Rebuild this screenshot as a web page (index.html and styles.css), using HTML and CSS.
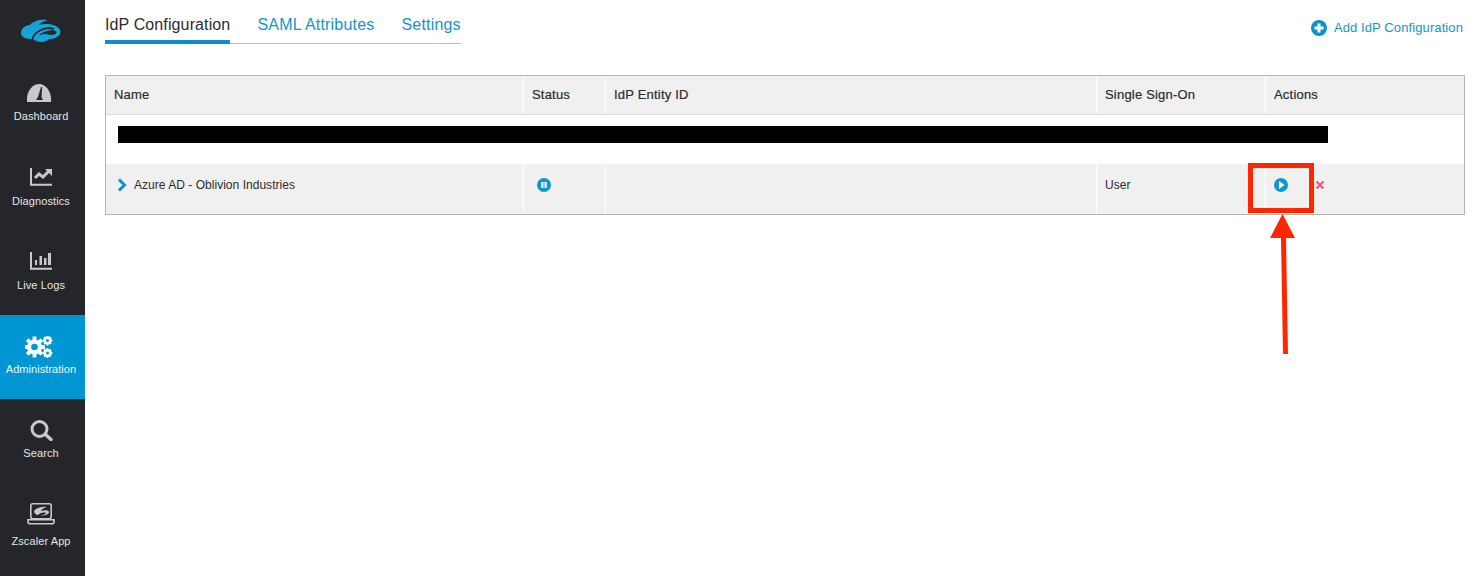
FILE: index.html
```html
<!DOCTYPE html>
<html lang="en">
<head>
<meta charset="utf-8">
<title>IdP Configuration</title>
<link rel="stylesheet" href="styles.css">
</head>
<body>
<div class="app">
  <nav class="sidebar">
    <div class="logo">
      <svg width="40" height="24" viewBox="0 0 40 24"><path fill="#12a5d6" d="M0 14C0 9 5 6 9 6 12 2 19 0 27 1 23 2 19 4 18 6 25 4 36 5 39 11 41 16 35 20 28 20 25 24 16 24 12 20 6 20 0 19 0 14Z"/><path fill="none" stroke="#25262a" stroke-width="1.800" d="M11.500 20C13 13 24 7 33 10"/><path fill="#25262a" d="M18 16.500C23 11 34 10 35.500 13 35.500 15.500 31 16.500 27 15.500 24 14.500 21 15.500 18 16.500Z"/></svg>
    </div>
    <a class="nav-item"><svg width="28" height="18" viewBox="0 0 28 18"><path fill="#c8c9cc" d="M0 18C-1 8 5 0 12 0s13 8 12 18z"/><path fill="#25262a" d="M14 3h1.200L14.500 13l1.500 3H9l2-3z"/></svg><span>Dashboard</span></a>
    <a class="nav-item"><svg width="28" height="18" viewBox="0 0 28 18"><path fill="none" stroke="#c8c9cc" stroke-width="2" d="M4 0v16.800h21"/><path fill="none" stroke="#c8c9cc" stroke-width="3" d="M8 10l4-4 4 3 6-6"/><path fill="#c8c9cc" d="M18 1h7v7z"/></svg><span>Diagnostics</span></a>
    <a class="nav-item"><svg width="28" height="18" viewBox="0 0 28 18"><path fill="none" stroke="#c8c9cc" stroke-width="2" d="M4 0v16.800h21"/><path fill="#c8c9cc" d="M8 8h2v5H8zM12.500 4H15v9h-2.500zM17 6h2.500v7H17zM21 1h3v12h-3z"/></svg><span>Live Logs</span></a>
    <a class="nav-item active"><svg width="32" height="22" viewBox="0 0 32 22"><g fill="none" stroke="#fff"><path stroke-width="3.800" d="M9.500 0.500v21M-1 11h21M2.200 3.600l14.600 14.800M16.800 3.600L2.200 18.400"/><circle cx="22.500" cy="4.500" r="3.200" stroke-width="2.300"/><path stroke-width="1.700" d="M22.500 -0.500v10M17.500 4.500h10M19 1l7 7M26 1l-7 7"/><circle cx="22.500" cy="17" r="3.200" stroke-width="2.300"/><path stroke-width="1.700" d="M22.500 12v10M17.500 17h10M19 13.500l7 7M26 13.500l-7 7"/></g><circle cx="9.500" cy="11" r="7.500" fill="#fff"/><circle cx="9.500" cy="11" r="3.300" fill="#0095d3"/><circle cx="22.500" cy="4.500" r="1.500" fill="#0095d3"/><circle cx="22.500" cy="17" r="1.500" fill="#0095d3"/></svg><span>Administration</span></a>
    <a class="nav-item"><svg width="28" height="21" viewBox="0 0 28 21"><circle cx="12.500" cy="9" r="7.500" fill="none" stroke="#c8c9cc" stroke-width="3"/><path stroke="#c8c9cc" stroke-width="3.500" stroke-linecap="round" d="M18.500 14.500l5.500 5"/></svg><span>Search</span></a>
    <a class="nav-item app-item"><svg width="28" height="22" viewBox="0 0 28 22"><rect x="3.800" y="0.800" width="20.400" height="15" rx="2" fill="none" stroke="#c8c9cc" stroke-width="1.600"/><path fill="#c8c9cc" d="M7 8c2-3 8-5 13-4-3 1-5 2-6 4 4-1 8-1 8 1 0 3-6 4-9 3 2 0 5 0 6-2-3-1-6 0-8 2-2 0-4-2-4-4z"/><path fill="none" stroke="#c8c9cc" stroke-width="1.600" d="M1 16.800h26v2a2 2 0 0 1-2 2H3a2 2 0 0 1-2-2z"/></svg><span>Zscaler App</span></a>
  </nav>
  <main class="main">
    <header class="topbar">
      <div class="tabs">
        <a class="tab current">IdP Configuration</a>
        <a class="tab">SAML Attributes</a>
        <a class="tab settings">Settings</a>
      </div>
      <a class="add-link">
        <svg width="16" height="16" viewBox="0 0 16 16"><circle cx="8" cy="8" r="8" fill="#0e90c8"/><path stroke="#fff" stroke-width="3" d="M8 3.500v9M3.500 8h9"/></svg>
        Add IdP Configuration
      </a>
    </header>
    <section class="table">
      <div class="row head">
        <div class="cell">Name</div>
        <div class="cell">Status</div>
        <div class="cell">IdP Entity ID</div>
        <div class="cell">Single Sign-On</div>
        <div class="cell">Actions</div>
      </div>
      <div class="redacted-row"><div class="redacted"></div></div>
      <div class="row body">
        <div class="cell name-cell">
          <svg width="10" height="14" viewBox="0 0 10 14"><path fill="none" stroke="#0e90c8" stroke-width="3" d="M2 1.500L7.500 7 2 12.500"/></svg>
          Azure AD - Oblivion Industries
        </div>
        <div class="cell">
          <svg class="status-icon" width="14" height="14" viewBox="0 0 14 14"><circle cx="7" cy="7" r="7" fill="#0e97cf"/><path fill="#fff" d="M4.300 4h2.200v6H4.300zM7.500 4h2.200v6H7.500z"/></svg>
        </div>
        <div class="cell"></div>
        <div class="cell">User</div>
        <div class="cell action-cell">
          <svg width="14" height="14" viewBox="0 0 14 14"><circle cx="7" cy="7" r="7" fill="#0e97cf"/><path fill="#fff" d="M5 3L10.500 7 5 11z"/></svg>
          <svg class="delete-icon" width="10" height="10" viewBox="0 0 10 10"><path stroke="#ea5a78" stroke-width="2.200" d="M1.500 1.500l7 7M8.500 1.500l-7 7"/></svg>
        </div>
      </div>
    </section>
  </main>
</div>
<div class="callout-box"></div>
<svg class="callout-arrow" width="26" height="140" viewBox="0 0 26 140"><path fill="#ff2600" d="M12.500 0L25 24h-9l2 116h-5L11 24H0z"/></svg>
</body>
</html>
```
FILE: styles.css
```css
* { box-sizing: border-box; }
html, body { margin: 0; height: 100%; }
body { font-family: "Liberation Sans", Arial, sans-serif; background: #fff; color: #2b2c30; overflow: hidden; }
.app { display: flex; height: 576px; }

.sidebar { width: 85px; flex: none; background: #25262a; display: flex; flex-direction: column; }
.logo { height: 63px; padding: 19px 3px 0 0; display: flex; justify-content: center; align-items: flex-start; }
.nav-item { height: 84px; display: grid; grid-template-rows: 24px auto; justify-items: center; align-content: start; row-gap: 3px; padding: 21px 3px 0 0; color: #e4e5e7; font-size: 11px; line-height: 13px; letter-spacing: 0.1px; }
.nav-item:first-of-type { row-gap: 2px; }
.nav-item.active { background: #0095d3; color: #f2f9fd; letter-spacing: 0.05px; }
.app-item { padding-top: 20px; grid-template-rows: 29px auto; }

.main { flex: 1; padding: 0 16px 0 20px; min-width: 0; }
.topbar { display: flex; justify-content: space-between; align-items: flex-start; height: 75px; }
.tabs { display: flex; gap: 27px; margin-top: 14px; border-bottom: 1px solid #bdbdbd; height: 30px; }
.tab { font-size: 16px; line-height: 22px; letter-spacing: 0.2px; color: #1594cc; height: 30px; white-space: nowrap; }
.tab.current { color: #2b2c30; letter-spacing: 0.12px; border-bottom: 4px solid #0a8fc9; }
.tab.settings { letter-spacing: 0.17px; }
.add-link { display: flex; align-items: center; gap: 7px; margin-top: 20px; font-size: 13px; line-height: 16px; letter-spacing: 0.1px; color: #1594cc; margin-right: 2px; }

.table { border: 1px solid #b5b5b5; height: 140px; display: flex; flex-direction: column; }
.row { display: grid; grid-template-columns: 418px 82px 491px 169px 1fr; background: #f0f0f0; }
.head { height: 39px; border-bottom: 1px solid #dcdcdc; font-size: 13px; letter-spacing: 0.2px; color: #2b2c30; }
.head .cell { display: flex; align-items: center; padding-bottom: 2px; -webkit-text-stroke: 0.2px #2b2c30; }
.body { height: 50px; font-size: 12px; letter-spacing: 0.03px; }
.cell { padding: 0 8px; border-right: 1px solid #fff; }
.cell:last-child { border-right: none; }
.redacted-row { height: 49px; background: #fff; padding: 11px 0 0 12px; }
.redacted { width: 1210px; height: 17px; background: #000; }
.body .cell { display: flex; align-items: center; padding-bottom: 9px; }
.name-cell { padding-left: 11px !important; gap: 7px; }
.status-icon { margin-left: 5px; }
.action-cell { padding-left: 8px !important; gap: 27px; }
.delete-icon { margin-top: 1px; }

.callout-box { position: absolute; left: 1248px; top: 163px; width: 66px; height: 50px; border: 5px solid #ff2600; }
.callout-arrow { position: absolute; left: 1270px; top: 214px; }
```
